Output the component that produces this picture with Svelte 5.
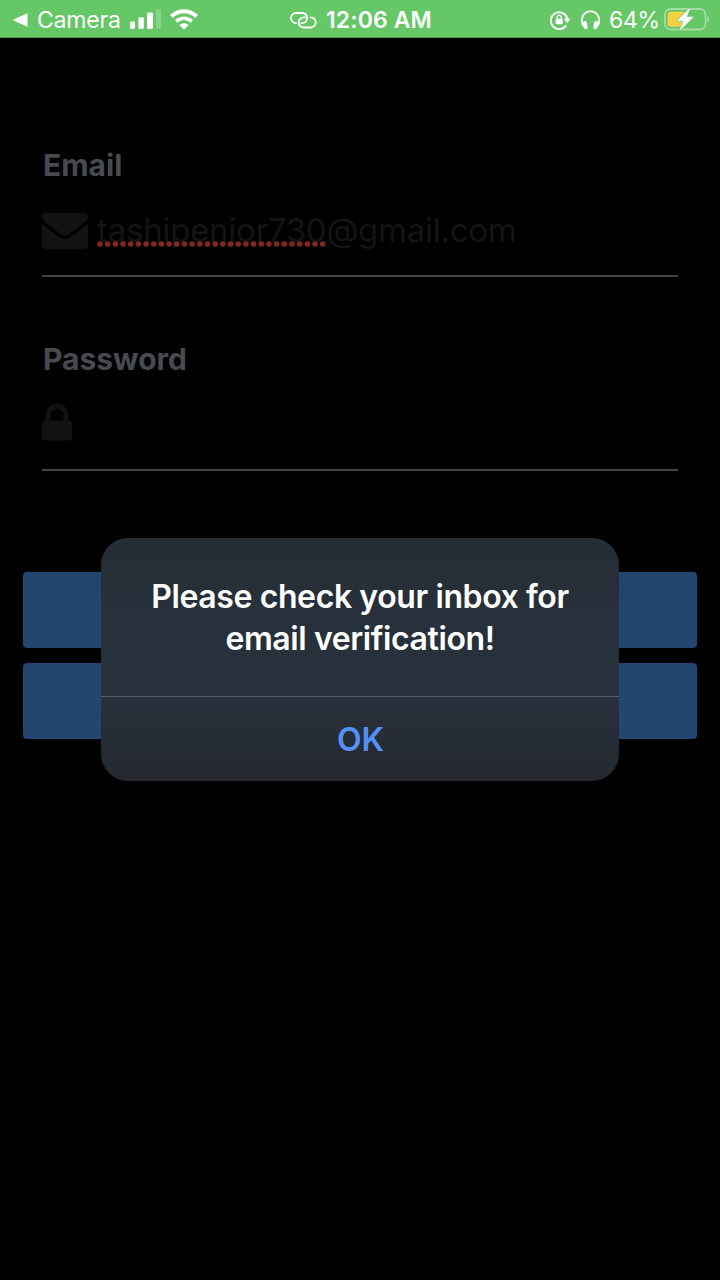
<script>
  const email = { name: 'tashipenjor730', domain: '@gmail.com' };
</script>

<div class="screen">
  <header class="status">
    <div class="side left">
      <svg class="back" width="15" height="14" viewBox="0 0 15 14"><path d="M14.500 .8v12.400q0 .8-.8.400L.6 7.600q-.8-.5 0-1L13.700.4q.8-.4.8.4z" fill="#fff" /></svg>
      <span class="camera">Camera</span>
      <svg class="signal" width="31" height="20" viewBox="0 0 31 20">
        <g fill="#fff">
          <rect x="0" y="12.5" width="5" height="7.5" rx="1.4" />
          <rect x="8.4" y="8.2" width="5.4" height="11.8" rx="1.4" />
          <rect x="17" y="3.5" width="6" height="16.5" rx="1.4" />
          <rect x="26" y="0" width="5" height="20" rx="1.4" opacity=".22" />
        </g>
      </svg>
      <svg class="wifi" width="28" height="21" viewBox="0 0 28 21">
        <path d="M1.5 7.4a17.8 17.8 0 0 1 25 0" fill="none" stroke="#fff" stroke-width="4.2" />
        <path d="M6.3 12.4a11 11 0 0 1 15.400 0" fill="none" stroke="#fff" stroke-width="3.600" />
        <path d="M14 20.8l-4.6-4.7a6.500 6.500 0 0 1 9.200 0z" fill="#fff" />
      </svg>
    </div>

    <div class="center">
      <svg width="27" height="17" viewBox="0 0 27 17" fill="none" stroke="#fff" stroke-width="1.8" stroke-linecap="round">
        <path d="M6 11.200A5.100 5.100 0 0 1 6.100 1h6.100a5.100 5.100 0 0 1 0 10.200h-1" />
        <path d="M20.600 5.300a5.100 5.100 0 0 1 .1 10.200h-7a5.100 5.100 0 0 1 0-10.200h1.500" />
      </svg>
      <span class="time">12:06 AM</span>
    </div>

    <div class="side right">
      <svg class="rotation" width="21" height="20" viewBox="0 0 21 20">
        <path d="M16.200 15.400a8.400 8.400 0 1 1 1.200-6.600" fill="none" stroke="#fff" stroke-width="1.9" />
        <path d="M13.800 8.600h6.700l-3.300 4.600z" fill="#fff" />
        <rect x="5.700" y="8.800" width="7" height="5.500" rx=".8" fill="#fff" />
        <path d="M7.200 9V7.400a2 2 0 0 1 4 0V9" fill="none" stroke="#fff" stroke-width="1.300" />
      </svg>
      <svg class="headphones" width="19" height="20" viewBox="0 0 19 20">
        <path d="M3 16.500C.3 13 .6 9.200 1.600 6.700a8.500 8.500 0 0 1 15.800 0c1 2.500 1.300 6.300-1.400 9.800" fill="none" stroke="#fff" stroke-width="1.800" />
        <rect x="2.200" y="11" width="4" height="8.200" rx="1.800" transform="rotate(-12 4.300 15)" fill="#fff" />
        <rect x="12.800" y="11" width="4" height="8.200" rx="1.800" transform="rotate(12 14.700 15)" fill="#fff" />
      </svg>
      <span class="percent">64%</span>
      <svg class="battery" width="46" height="24" viewBox="0 0 46 24">
        <rect x="1" y="2" width="40.5" height="20.5" rx="5.5" fill="none" stroke="#fff" stroke-opacity=".4" stroke-width="1.8" />
        <path d="M43.400 9q1.800 .7 1.800 3.300t-1.800 3.300z" fill="#fff" opacity=".45" />
        <path d="M6.500 4.800h14L15 15h4.200l-1.400 4.700H6.500q-3 0-3-3V7.800q0-3 3-3z" fill="#f8d044" />
        <path d="M24.900 1.500L13.200 13.400q-.7.900.5.900h5.700l-3.500 7.900q-.3 1.300.8.5L28.900 10.800q.8-1-.5-1h-5.500l3-7.700q.3-1.400-1-.6z" fill="#fff" stroke="#65c766" stroke-width="1.200" paint-order="stroke" />
      </svg>
    </div>
  </header>

  <main>
    <section class="field">
      <label for="email">Email</label>
      <div class="entry" id="email">
        <svg class="envelope" width="46" height="36" viewBox="0 0 46 36" fill="#121212">
          <path d="M4.300 0h37.400Q46 0 46 4.300q0 2.200-1.800 3.600L28.200 20.400q-5.200 4.200-10.400 0L1.800 7.900Q0 6.500 0 4.300 0 0 4.300 0z" />
          <path d="M0 10.800l16.200 12.500q6.800 5.400 13.600 0L46 10.800v20.900q0 4.300-4.300 4.300H4.300Q0 36 0 31.700z" />
        </svg>
        <div class="value"><span class="misspelt">{email.name}<svg class="dots" width="230" height="6"><line x1="3" y1="3" x2="228" y2="3" stroke="#84271f" stroke-width="5.600" stroke-linecap="round" stroke-dasharray="0 7.680" /></svg></span><span>{email.domain}</span></div>
      </div>
    </section>

    <section class="field">
      <label for="password">Password</label>
      <div class="entry" id="password">
        <svg class="lock" width="30" height="37" viewBox="0 0 30 37">
          <path d="M6.200 18V11a8.800 8.800 0 0 1 17.600 0v7" fill="none" stroke="#121212" stroke-width="5" />
          <rect y="16.500" width="30" height="20" rx="3" fill="#121212" />
        </svg>
      </div>
    </section>

    <div class="actions">
      <div class="action"></div>
      <div class="action"></div>
    </div>
  </main>

  <div class="alert" role="alertdialog">
    <div class="message"><div class="first">Please check your inbox for</div><div class="second">email verification!</div></div>
    <button><span>OK</span></button>
  </div>
</div>

<style>
  :global(body) { margin: 0; background: #000; }
  .screen {
    position: relative;
    width: 720px;
    height: 1280px;
    overflow: hidden;
    background: #000;
    font-family: Inter, "Liberation Sans", sans-serif;
  }
  svg { display: block; flex: none; }
  .status {
    display: flex;
    height: 38px;
    box-sizing: border-box;
    border-bottom: 1px solid #4f9a50;
    background: #65c766;
    color: #fff;
    font-size: 23px;
    line-height: 40px;
    white-space: nowrap;
  }
  .status > div { display: flex; align-items: center; height: 40px; }
  .left { width: 277px; padding-left: 13px; }
  .camera { width: 83px; margin-left: 9px; letter-spacing: -.2px; }
  .signal { margin: -2px 0 0 10px; }
  .wifi { margin: -1px 0 0 9px; }
  .center { width: 260px; }
  .time { margin-left: 9px; font-weight: 600; letter-spacing: .1px; }
  .right { width: 170px; }
  .headphones { margin-left: 10px; }
  .percent { width: 50px; margin-left: 9px; letter-spacing: -.3px; }
  .battery { margin: -2px 0 0 5px; }

  main { padding: 108px 23px 0; }
  .field { height: 194px; padding: 0 19px; box-sizing: border-box; }
  label {
    display: block;
    height: 38px;
    padding-left: 1px;
    color: #474a51;
    font-size: 30px;
    font-weight: 700;
    line-height: 38px;
  }
  .entry {
    display: flex;
    align-items: center;
    height: 93px;
    box-sizing: border-box;
    border-bottom: 2px solid #434348;
  }
  .envelope { margin-top: 3px; }
  .lock { margin-top: -3px; }
  .value {
    margin: 0 0 0 9px;
    color: #141414;
    font-size: 33px;
    letter-spacing: -.25px;
    line-height: 40px;
    white-space: nowrap;
  }
  .misspelt { position: relative; }
  .dots { position: absolute; left: 0; bottom: 3px; }
  .actions { display: grid; gap: 15px; margin-top: 38px; }
  .action { height: 76px; border-radius: 4px; background: #22466f; }

  .alert {
    position: absolute;
    left: 101px;
    top: 538px;
    display: flex;
    flex-direction: column;
    width: 518px;
    height: 243px;
    overflow: hidden;
    border-radius: 27px;
    background: linear-gradient(#262c34, #27313c 35%, #27313c 65%, #25282e);
    text-align: center;
  }
  .message {
    height: 159px;
    padding-top: 38px;
    box-sizing: border-box;
    border-bottom: 1px solid #55606a;
    color: #fff;
    font-size: 32px;
    font-weight: 600;
    letter-spacing: -.4px;
    line-height: 42px;
    white-space: nowrap;
  }
  button {
    flex: 1;
    padding: 2px 0 0 1px;
    border: 0;
    background: none;
    color: #5590f5;
    font: 600 32px/82px Inter, "Liberation Sans", sans-serif;
  }
</style>
